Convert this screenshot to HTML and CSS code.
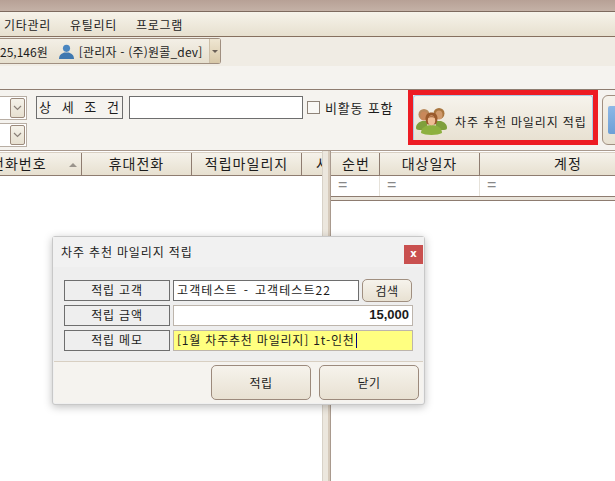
FILE: index.html
```html
<!DOCTYPE html>
<html lang="ko">
<head>
    <meta charset="UTF-8">
    <title>차주 추천 마일리지 적립</title>
    <link rel="stylesheet" href="styles.css">
</head>
<body>
    <div class="titlebar"></div>

    <div class="menubar">
        <span>기타관리</span>
        <span>유틸리티</span>
        <span>프로그램</span>
    </div>

    <div class="statusbar">
        <div class="account">
            <span class="balance">25,146원</span>
            <svg class="user-icon" width="15" height="15" viewBox="0 0 16 16">
                <circle cx="8" cy="4.6" r="3.8" fill="#4a86c0"/>
                <path d="M0 16c0-4 2.5-6 5.5-7h5c3 1 5.500 3 5.500 7z" fill="#3f78b0"/>
            </svg>
            <span class="user-name">[관리자 - (주)원콜_dev]</span>
            <span class="account-arrow"></span>
        </div>
    </div>

    <div class="blank-bar"></div>

    <div class="search">
        <div class="combos">
            <div class="combo"><span class="combo-btn"><svg width="9" height="6" viewBox="0 0 9 6"><path d="M1 1l3.500 3.500L8 1" fill="none" stroke="#8a8078" stroke-width="1.2"/></svg></span></div>
            <div class="combo"><span class="combo-btn"><svg width="9" height="6" viewBox="0 0 9 6"><path d="M1 1l3.500 3.500L8 1" fill="none" stroke="#8a8078" stroke-width="1.2"/></svg></span></div>
        </div>
        <div class="cond-label">상 세 조 건</div>
        <div class="cond-input"></div>
        <label class="check"><span class="check-box"></span>비활동 포함</label>
        <div class="highlight">
            <button class="mileage-btn">
                <svg class="people" width="31" height="27" viewBox="0 0 31 27">
                    <!-- back two people -->
                    <path d="M0 20c0-4 3-6 6-7h5v9H3c-2 0-3-1-3-2z" fill="#7f9f3c"/>
                    <path d="M31 20c0-4-3-6-6-7h-5v9h8c2 0 3-1 3-2z" fill="#7f9f3c"/>
                    <circle cx="8" cy="6.500" r="5.500" fill="#b98a5c"/>
                    <ellipse cx="8" cy="8" rx="3.500" ry="4.500" fill="#c9885a"/>
                    <circle cx="23" cy="5.500" r="5.500" fill="#a9763f"/>
                    <ellipse cx="23" cy="7" rx="3.500" ry="4.500" fill="#d09a6c"/>
                    <!-- front person -->
                    <path d="M5 25c0-5 4-8 10.500-8S26 20 26 25c-4 2.500-17 2.500-21 0z" fill="#8db03f"/>
                    <path d="M9.500 10.500c0-4 2.500-6 6-6s6 2 6 6c0 3-1 5-2 6h-8c-1-1-2-3-2-6z" fill="#9a5a2c"/>
                    <ellipse cx="15.500" cy="12.500" rx="3.700" ry="5" fill="#efbd94"/>
                    <path d="M11.500 10c1-2.500 7-2.500 8 0-2-1-6-1-8 0z" fill="#9a5a2c"/>
                </svg>
                <span>차주 추천 마일리지 적립</span>
            </button>
        </div>
        <div class="next-btn"><span class="next-inner"></span></div>
    </div>

    <div class="panes">
        <div class="pane-left">
            <div class="grid-head">
                <div class="col col-phone">전화번호<span class="sort-arrow"></span></div>
                <div class="col col-110">휴대전화</div>
                <div class="col col-110">적립마일리지</div>
                <div class="col col-clip">사</div>
            </div>
        </div>
        <div class="splitter"></div>
        <div class="pane-right">
            <div class="grid-head">
                <div class="col col-no">순번</div>
                <div class="col col-100">대상일자</div>
                <div class="col col-rest">계정</div>
            </div>
            <div class="filter-row">
                <div class="cell col-no">=</div>
                <div class="cell col-100">=</div>
                <div class="cell col-rest">=</div>
            </div>
            <div class="scroll-band"></div>
        </div>
    </div>

    <div class="dialog">
        <div class="dialog-title">
            <span class="dialog-name">차주 추천 마일리지 적립</span>
            <span class="close">x</span>
        </div>
        <div class="dialog-body">
            <div class="form-row">
                <div class="form-label">적립 고객</div>
                <div class="form-input customer">고객테스트 - 고객테스트22</div>
                <button class="search-btn">검색</button>
            </div>
            <div class="form-row">
                <div class="form-label">적립 금액</div>
                <div class="form-input amount">15,000</div>
            </div>
            <div class="form-row">
                <div class="form-label">적립 메모</div>
                <div class="form-input memo">[1월 차주추천 마일리지] 1t-인천<span class="caret"></span></div>
            </div>
        </div>
        <div class="dialog-foot">
            <button class="foot-btn">적립</button>
            <button class="foot-btn">닫기</button>
        </div>
    </div>
</body>
</html>
```

FILE: styles.css
```css
* {
    box-sizing: border-box;
}
html, body {
    height: 100%;
}
body {
    margin: 0;
    width: 615px;
    height: 481px;
    overflow: hidden;
    position: relative;
    display: flex;
    flex-direction: column;
    background: #f5f3ef;
    color: #1c1c1c;
    font-family: "Noto Sans CJK KR", "Liberation Sans", sans-serif;
    font-size: 12px;
}
button {
    font-family: inherit;
    color: inherit;
    padding: 0;
}

.titlebar {
    height: 11px;
    background: linear-gradient(#b7a196, #c4b1a6);
    border-bottom: 1px solid #7d6a5e;
    box-sizing: content-box;
    flex: none;
}
.menubar {
    height: 25px;
    flex: none;
    display: flex;
    align-items: center;
    gap: 19px;
    padding-left: 4px;
    letter-spacing: .7px;
    background: linear-gradient(#f6f3ea, #e7e0cf);
    border-bottom: 1px solid #86705f;
}
.statusbar {
    height: 29px;
    flex: none;
    background: #f0ece4;
    padding-top: 1px;
}
.account {
    width: 221px;
    height: 26px;
    display: flex;
    align-items: center;
    position: relative;
    background: linear-gradient(#f3efe6, #e6dfce);
    border: 1px solid #a08f80;
    border-left: none;
    border-radius: 0 3px 3px 0;
}
.balance {
    margin-right: 11px;
}
.user-name {
    margin-left: 5px;
    letter-spacing: .2px;
}
.user-icon {
    flex: none;
}
.account-arrow {
    position: absolute;
    right: 0;
    top: 0;
    bottom: 0;
    width: 11px;
    background: linear-gradient(#efe6d2, #d8c8a8);
    border-left: 1px solid #cdbfa8;
}
.account-arrow::after {
    content: "";
    position: absolute;
    left: 2px;
    top: 11px;
    border-left: 3px solid transparent;
    border-right: 3px solid transparent;
    border-top: 3px solid #6a6058;
}
.blank-bar {
    height: 24px;
    flex: none;
    background: #f5f3ef;
    border-bottom: 1px solid #8e7c70;
}

.search {
    height: 61px;
    display: flex;
    align-items: flex-start;
    flex: none;
    background: #f5f3ef;
    border-bottom: 1px solid #a99a8e;
}
.combos {
    width: 27px;
    flex: none;
    padding-top: 6px;
    display: flex;
    flex-direction: column;
    gap: 3px;
}
.combo {
    height: 24px;
    background: #fff;
    border: 1px solid #b8aea4;
    border-left: none;
    padding: 1px 1px 1px 0;
    display: flex;
    justify-content: flex-end;
}
.combo-btn {
    width: 15px;
    background: linear-gradient(#f5f2ea, #e7e0d0);
    border: 1px solid #9c8a7c;
    border-radius: 2px;
    display: flex;
    align-items: center;
    justify-content: center;
}
.cond-label {
    width: 87px;
    height: 23px;
    flex: none;
    margin: 6px 0 0 9px;
    padding-bottom: 2px;
    border: 1px solid #6e6e6e;
    background: #f5f3ef;
    display: flex;
    align-items: center;
    justify-content: center;
    white-space: pre;
    word-spacing: 5px;
    letter-spacing: 1px;
    font-size: 13px;
}
.cond-input {
    width: 174px;
    height: 23px;
    flex: none;
    margin: 6px 0 0 6px;
    background: #fff;
    border: 1px solid #6e6e6e;
}
.check {
    display: flex;
    align-items: center;
    flex: none;
    margin: 6px 0 0 4px;
    height: 22px;
    width: 101px;
    gap: 5px;
    font-size: 13px;
    letter-spacing: .8px;
    white-space: nowrap;
}
.check-box {
    width: 13px;
    height: 13px;
    flex: none;
    background: #f9f8f5;
    border: 1px solid #8e8378;
}
.highlight {
    width: 190px;
    height: 55px;
    flex: none;
    border: 5px solid #ed1c24;
}
.mileage-btn {
    width: 100%;
    height: 100%;
    display: flex;
    align-items: center;
    padding: 6px 0 0 2px;
    border: none;
    border-top: 1px solid #a9cbe6;
    border-left: 1px solid #a9cbe6;
    border-right: 1px solid #a9cbe6;
    border-radius: 3px 3px 0 0;
    background: linear-gradient(#f6f3ec, #e8e1d2);
    font-size: 12px;
    letter-spacing: .85px;
    white-space: nowrap;
}
.people {
    flex: none;
    margin-right: 8px;
}
.next-btn {
    width: 40px;
    height: 50px;
    margin: 5px 0 0 4px;
    flex: none;
    padding: 10px 0 0 5px;
    border: 1px solid #a08f80;
    border-radius: 6px;
    background: linear-gradient(#f6f3ec, #e8e1d2);
}
.next-inner {
    display: block;
    width: 20px;
    height: 28px;
    border-radius: 2px;
    background: linear-gradient(#8db8e6, #6d9fd6);
}

.panes {
    flex: 1;
    display: flex;
    background: #fff;
    min-height: 0;
}
.pane-left {
    width: 322px;
    flex: none;
    overflow: hidden;
    padding-top: 1px;
    background: #fff;
    height: 100%;
}
.splitter {
    width: 9px;
    flex: none;
    background: linear-gradient(90deg, #d8d2c8 0 1px, #ece7de 1px 6px, #d6cabb 6px 8px, #a99a8e 8px 9px);
}
.pane-right {
    flex: 1;
    min-width: 0;
    padding-top: 1px;
}
.grid-head {
    height: 24px;
    display: flex;
    background: linear-gradient(#f5f2ea, #e7e0d0);
    border-top: 1px solid #d8cfc2;
    border-bottom: 1px solid #8e7c70;
    font-size: 14px;
    letter-spacing: 1px;
}
.col {
    height: 100%;
    flex: none;
    display: flex;
    align-items: center;
    justify-content: center;
    padding-bottom: 2px;
    white-space: nowrap;
    border-right: 1px solid #8e7c70;
}
.col-phone {
    width: 82px;
    position: relative;
    justify-content: flex-start;
    text-indent: -9px;
}
.sort-arrow {
    position: absolute;
    left: 69px;
    top: 10px;
    border-left: 4px solid transparent;
    border-right: 4px solid transparent;
    border-bottom: 4px solid #9a948c;
}
.col-110 {
    width: 110px;
}
.col-clip {
    width: 21px;
    border-right: none;
    justify-content: flex-start;
    padding-left: 14px;
    overflow: hidden;
}
.col-no {
    width: 49px;
    padding-left: 2px;
}
.col-100 {
    width: 100px;
}
.col-rest {
    width: 176px;
    border-right: none;
}
.filter-row {
    height: 20px;
    display: flex;
    background: #fff;
    color: #888;
}
.cell {
    height: 100%;
    flex: none;
    padding: 0 8px 0 7px;
    line-height: 18px;
    font-family: "Liberation Sans", sans-serif;
    font-size: 16px;
    border-right: 1px solid #e6e2da;
}
.scroll-band {
    height: 5px;
    background: #e9e4da;
    border-top: 1px solid #8e7c70;
    border-bottom: 1px solid #8e7c70;
}

/* dialog sits over the grids */
.dialog {
    position: absolute;
    left: 52px;
    top: 236px;
    width: 373px;
    height: 169px;
    display: flex;
    flex-direction: column;
    background: #f0f0f0;
    border: 1px solid #c8c8c8;
    border-radius: 3px;
    box-shadow: 0 2px 8px rgba(0,0,0,0.25);
}
.dialog-title {
    height: 30px;
    flex: none;
    display: flex;
    align-items: center;
    justify-content: space-between;
    padding: 0 1px 0 8px;
    background: #f1f1f1;
    font-size: 12px;
    letter-spacing: .85px;
}
.dialog-name {
    margin-bottom: 2px;
}
.close {
    width: 19px;
    height: 19px;
    margin-top: 4px;
    background: #c9504f;
    color: #fff;
    font-family: "DejaVu Sans", sans-serif;
    font-size: 10px;
    font-weight: bold;
    line-height: 17px;
    text-align: center;
    letter-spacing: 0;
}
.dialog-body {
    flex: 1;
    background: #eeeeee;
    padding: 13px 11px 0 11px;
    display: flex;
    flex-direction: column;
    gap: 4px;
}
.form-row {
    height: 21px;
    display: flex;
    align-items: center;
}
.form-label {
    width: 106px;
    height: 21px;
    flex: none;
    border: 1px solid #6e6e6e;
    background: #eeeeee;
    text-align: center;
    line-height: 18px;
    letter-spacing: .8px;
}
.form-input {
    height: 21px;
    margin-left: 3px;
    flex: 1;
    padding: 0 3px;
    line-height: 18px;
    background: #fff;
    border: 1px solid #bdb5ac;
    white-space: nowrap;
}
.customer {
    flex: none;
    width: 186px;
    border-color: #6e6e6e;
    letter-spacing: 1.1px;
    word-spacing: 1.5px;
}
.amount {
    text-align: right;
    font-weight: bold;
    font-family: "Liberation Sans", sans-serif;
    font-size: 13px;
}
.memo {
    background: #ffff80;
    letter-spacing: .8px;
}
.caret {
    display: inline-block;
    width: 1px;
    height: 15px;
    margin-left: 1px;
    vertical-align: -3px;
    background: #000080;
}
.search-btn {
    width: 50px;
    height: 23px;
    margin-left: 3px;
    flex: none;
    font-size: 12px;
    letter-spacing: .5px;
    border: 1px solid #a08f80;
    border-radius: 5px;
    background: linear-gradient(#f6f3ec, #e8e1d2);
}
.dialog-foot {
    height: 42px;
    flex: none;
    margin: 0 1px 1px 1px;
    display: flex;
    justify-content: flex-end;
    align-items: flex-start;
    gap: 8px;
    padding: 3px 4px 0 0;
    background: #f5f3ef;
    border-top: 1px solid #d8cfc2;
}
.foot-btn {
    width: 100px;
    height: 35px;
    font-size: 12px;
    letter-spacing: .5px;
    border: 1px solid #9c8a7c;
    border-radius: 5px;
    background: linear-gradient(#f6f3ec, #e8e1d2);
}
```
